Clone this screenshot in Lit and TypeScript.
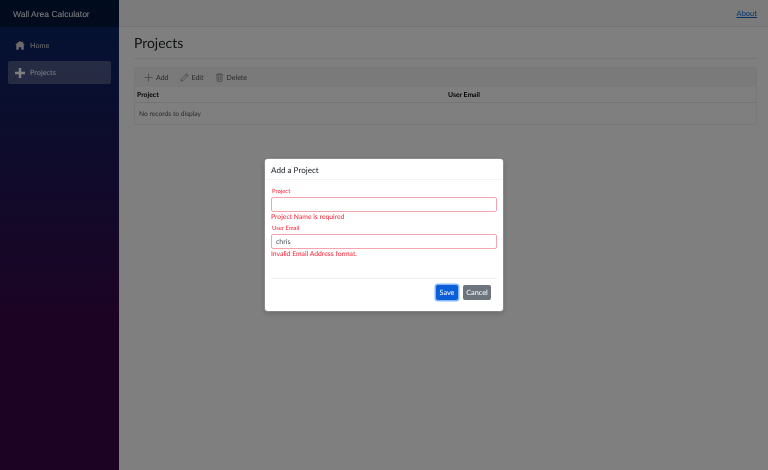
import { LitElement, css, html } from "lit";
import { customElement } from "lit/decorators.js";

@customElement("app-root")
export class AppRoot extends LitElement {
  static override styles = css`
    :host {
      display: block;
      width: 768px;
      height: 470px;
      overflow: hidden;
      position: relative;
      font-family: Lato, "Open Sans", sans-serif;
      font-size: 8px;
      color: #212529;
      background: #fff;
      text-rendering: geometricPrecision;
    }
    * {
      box-sizing: border-box;
    }
    .page {
      display: flex;
      height: 100%;
      will-change: transform;
    }
    .sidebar {
      width: 119px;
      flex: none;
      background-image: linear-gradient(180deg, #052767 0%, #3a0647 70%);
    }
    .brand {
      height: 27px;
      padding: 0 13px;
      display: flex;
      align-items: center;
      background: rgba(0, 0, 0, 0.4);
      color: #fff;
      font-family: "Liberation Sans", sans-serif;
      font-size: 8.5px;
    }
    .nav {
      padding: 7px 8px 0;
      display: flex;
      flex-direction: column;
      gap: 4px;
    }
    .nav-link {
      height: 23px;
      display: flex;
      align-items: center;
      padding-left: 7px;
      gap: 5px;
      border-radius: 2px;
      color: #d7d7d7;
      font-size: 7.3px;
    }
    .nav-link.active {
      background: rgba(255, 255, 255, 0.25);
      color: #fff;
    }
    .nav-link svg {
      width: 10px;
      height: 10px;
      fill: currentColor;
    }
    .main {
      flex: 1;
      min-width: 0;
    }
    .topbar {
      height: 27px;
      background: #f7f7f7;
      border-bottom: 1px solid #e6e5e5;
      display: flex;
      align-items: center;
      justify-content: flex-end;
      padding-right: 11px;
      font-size: 7.5px;
    }
    .topbar a {
      color: #0366d6;
      text-decoration: underline;
    }
    .content {
      padding: 7px 11px 0 15px;
    }
    h1 {
      margin: 0;
      font-size: 13.9px;
      font-weight: 400;
      line-height: 18px;
      padding-bottom: 6px;
      border-bottom: 1px solid #e9ecef;
    }
    .grid {
      margin-top: 8px;
      border: 1px solid #f0f0f0;
    }
    .toolbar {
      height: 19px;
      background: #f5f5f5;
      display: flex;
      align-items: center;
      gap: 11px;
      padding-left: 9px;
      color: #555;
      font-size: 7px;
    }
    .tool {
      display: flex;
      align-items: center;
      gap: 3px;
    }
    .tool svg {
      width: 9px;
      height: 9px;
      fill: none;
      stroke: #757575;
      stroke-width: 0.7;
    }
    .head {
      display: grid;
      grid-template-columns: 311px 1fr;
      height: 16px;
      align-items: center;
      padding-left: 2px;
      border-bottom: 1px solid #e8e8e8;
      font-size: 6.8px;
      font-weight: 700;
      color: #000;
    }
    .empty {
      height: 21px;
      display: flex;
      align-items: center;
      padding-left: 4px;
      font-size: 6.7px;
      color: #555;
    }
    .overlay {
      position: absolute;
      inset: 0;
      background: rgba(0, 0, 0, 0.5);
      display: flex;
      align-items: center;
      justify-content: center;
      will-change: transform;
    }
    .modal {
      width: 238px;
      height: 152px;
      background: #fff;
      border-radius: 3px;
      display: flex;
      flex-direction: column;
      box-shadow: 0 0 0 0.5px rgba(255, 255, 255, 0.3), 0 2px 6px rgba(0, 0, 0, 0.2);
    }
    .modal-title {
      height: 21px;
      flex: none;
      display: flex;
      align-items: center;
      padding: 1px 0 0 6px;
      border-bottom: 1px solid #f2f2f2;
      font-size: 8.1px;
      color: #212529;
    }
    .form {
      padding: 7px 6px 0;
      display: flex;
      flex-direction: column;
    }
    label {
      color: #ff1a2e;
      font-size: 5.9px;
      line-height: 10px;
      padding-left: 1px;
    }
    .input {
      height: 15px;
      border: 1px solid #f5a3ae;
      border-radius: 2px;
      padding-left: 4px;
      display: flex;
      align-items: center;
      color: #495057;
      font-size: 7px;
    }
    .error {
      color: #ff1a2e;
      font-size: 6.8px;
      line-height: 11px;
      margin-bottom: 1px;
    }
    .footer {
      margin: auto 6px 0;
      height: 33px;
      border-top: 1px solid #eeeeee;
      display: flex;
      align-items: flex-start;
      justify-content: flex-end;
      gap: 5px;
      padding: 6px 6px 0 0;
    }
    .btn {
      height: 15px;
      border-radius: 2px;
      color: #fff;
      font-size: 7.3px;
      display: flex;
      align-items: center;
      justify-content: center;
    }
    .btn.save {
      background: #0b5ed7;
      box-shadow: 0 0 0 1.5px #86b7fe;
      width: 22px;
    }
    .btn.cancel {
      background: #6c757d;
      width: 28px;
    }
  `;

  override render() {
    return html`
      <div class="page">
        <aside class="sidebar">
          <div class="brand">Wall Area Calculator</div>
          <nav class="nav">
            <div class="nav-link">
              <svg viewBox="0 0 8 8"><path d="M4 0 0 3h1v4h2V5h2v2h2V3h1L6.5 1.9V.5h-1v.6z" /></svg>
              Home
            </div>
            <div class="nav-link active">
              <svg viewBox="0 0 8 8"><path d="M3 0h2v3h3v2H5v3H3V5H0V3h3z" /></svg>
              Projects
            </div>
          </nav>
        </aside>
        <div class="main">
          <div class="topbar"><a>About</a></div>
          <div class="content">
            <h1>Projects</h1>
            <div class="grid">
              <div class="toolbar">
                <span class="tool">
                  <svg viewBox="0 0 10 10"><path d="M5 .5v9M.5 5h9" /></svg>
                  Add
                </span>
                <span class="tool">
                  <svg viewBox="0 0 10 10"><path d="M1 9l.6-2.4L7.4.9l1.7 1.7-5.7 5.8zM6.5 1.8l1.7 1.7" /></svg>
                  Edit
                </span>
                <span class="tool">
                  <svg viewBox="0 0 10 10"><path d="M1 2h8M3.5 2V.8h3V2M2 2l.5 7.3h5L8 2M4 3.5v4.5M6 3.5v4.5" /></svg>
                  Delete
                </span>
              </div>
              <div class="head"><span>Project</span><span>User Email</span></div>
              <div class="empty">No records to display</div>
            </div>
          </div>
        </div>
      </div>
      <div class="overlay">
        <div class="modal">
          <div class="modal-title">Add a Project</div>
          <div class="form">
            <label>Project</label>
            <div class="input"></div>
            <div class="error">Project Name is required</div>
            <label>User Email</label>
            <div class="input">chris</div>
            <div class="error">Invalid Email Address format.</div>
          </div>
          <div class="footer">
            <div class="btn save">Save</div>
            <div class="btn cancel">Cancel</div>
          </div>
        </div>
      </div>
    `;
  }
}
